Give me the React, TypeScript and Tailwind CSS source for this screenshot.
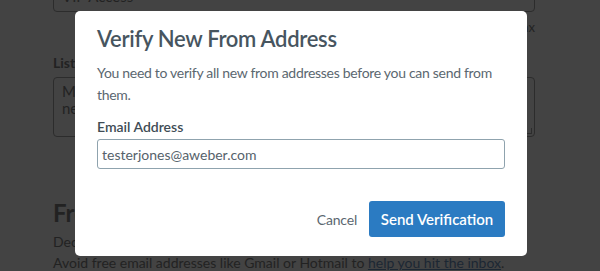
export default function App() {
  return (
    <div
      className="relative h-[271px] w-[600px] overflow-hidden bg-[#434343] text-[#222]"
      style={{ fontFamily: 'Lato, "Noto Sans", sans-serif' }}
    >
      {/* page behind the overlay */}
      <div className="ml-[53px] w-[482px]">
        <div className="-mt-[20px] flex h-[32px] items-center rounded-[4px] border border-[#2c2c2c] px-[8px] text-[15px]">
          VIP Access
        </div>
        <div className="mt-[6px] text-right text-[13px] leading-[18px]">50 max</div>
        <div className="mt-[18px] text-[14px] font-bold leading-[18px]">List Description</div>
        <div className="relative mt-[5px] h-[60px] rounded-[4px] border border-[#2c2c2c] px-[8px] py-[5px] text-[15px] leading-[17px]">
          More about our VIP list and
          <br />
          new subscribers
          <span className="absolute bottom-[2px] right-[2px] h-[6px] w-[6px] border-b border-r border-[#2c2c2c]" />
        </div>
        <h2 className="mt-[62px] text-[24px] font-bold leading-[28px]">From Address</h2>
        <p className="mt-[4px] text-[14px] leading-[22px]">Decide which address your subscribers will see.</p>
        <p className="text-[14px] leading-[20px]">
          Avoid free email addresses like Gmail or Hotmail to{' '}
          <span className="text-[#1c2733] underline">help you hit the inbox</span>.
        </p>
      </div>

      {/* modal */}
      <div className="absolute left-[75px] top-[11px] w-[452px] rounded-[5px] bg-white px-[22px] pb-[19px] pt-[13px]">
        <h1 className="text-[22px] font-semibold leading-[30px] tracking-[-0.3px] text-[#47555f]">
          Verify New From Address
        </h1>
        <p className="mt-[8px] text-[14px] leading-[22px] tracking-[-0.3px] text-[#5b6770]">
          You need to verify all new from addresses before you can send from them.
        </p>
        <label className="mt-[12px] block text-[14px] font-semibold leading-[18px] text-[#404c55]">
          Email Address
        </label>
        <div className="mt-[3px] flex h-[30px] items-center rounded-[3px] border border-[#8fa3ae] px-[4px] text-[14px] text-[#56626b]">
          testerjones@aweber.com
        </div>
        <div className="mt-[32px] flex items-center justify-end gap-[12px]">
          <button className="text-[14px] tracking-[-0.2px] text-[#5b6770]">Cancel</button>
          <button className="h-[36px] w-[136px] rounded-[3px] bg-[#2b7bc2] text-[15px] font-semibold text-white">
            Send Verification
          </button>
        </div>
      </div>
    </div>
  )
}
